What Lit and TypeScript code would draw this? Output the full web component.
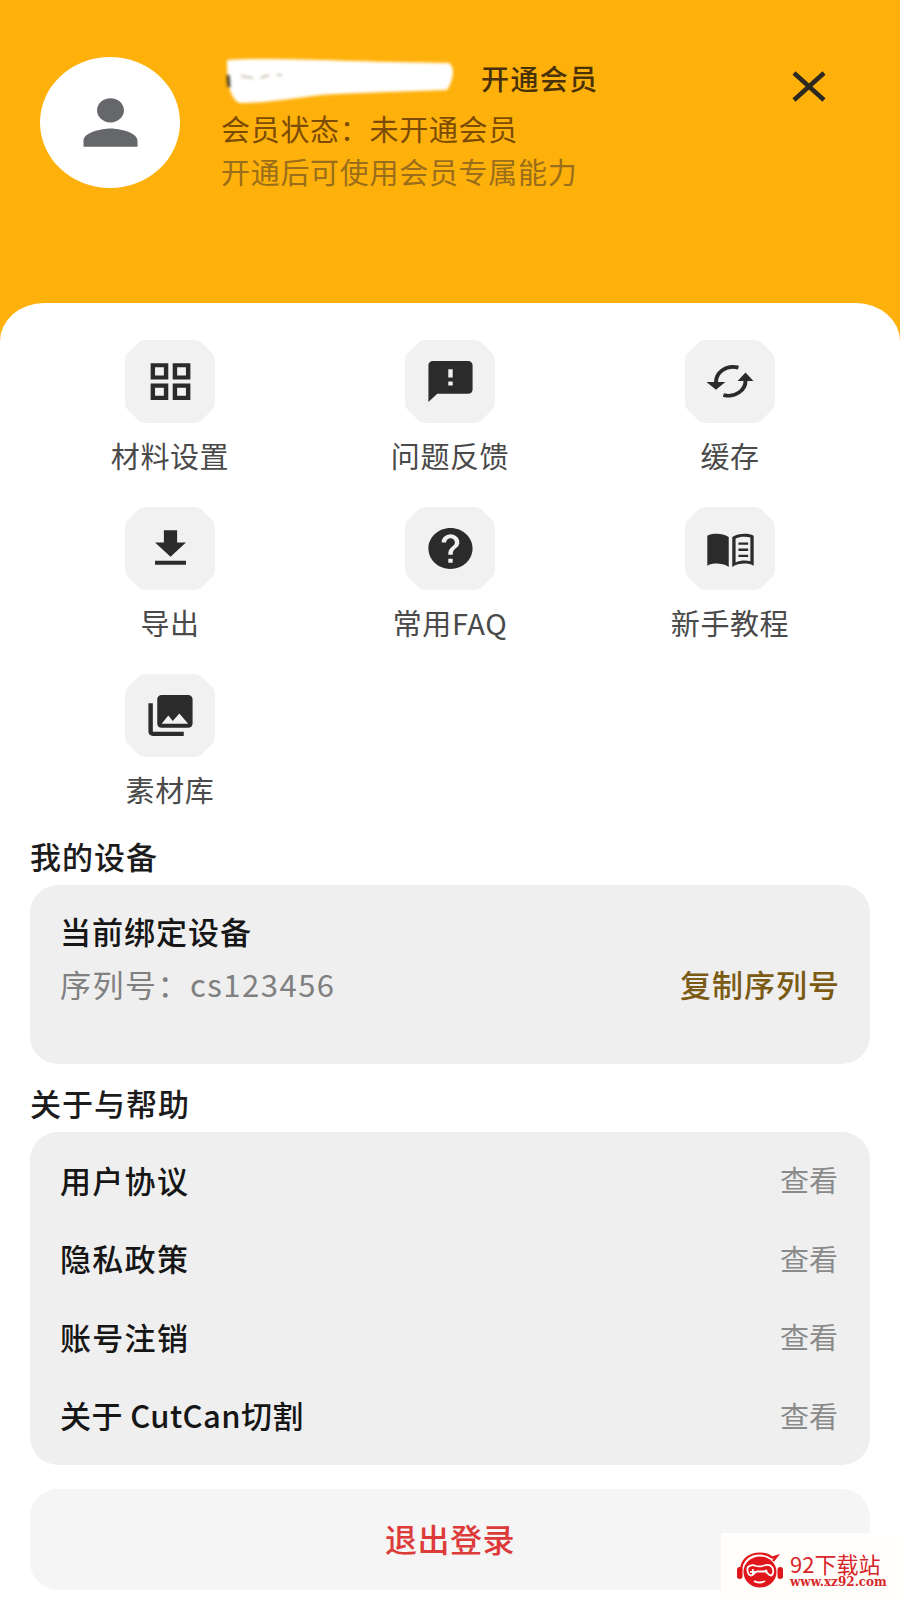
import { LitElement, css, html, svg } from 'lit';
import { customElement } from 'lit/decorators.js';

const icons = {
   grid: svg`<path d="M3 3v8h8V3H3zm6 6H5V5h4v4zm-6 4v8h8v-8H3zm6 6H5v-4h4v4zm4-16v8h8V3h-8zm6 6h-4V5h4v4zm-6 4v8h8v-8h-8zm6 6h-4v-4h4v4z"/>`,
   feedback: svg`<path d="M20 2H4c-1.1 0-1.99.9-1.99 2L2 22l4-4h14c1.1 0 2-.9 2-2V4c0-1.1-.9-2-2-2zm-7 12h-2v-2h2v2zm0-4h-2V6h2v4z"/>`,
   sync: svg`<path d="M5.4 12.4C5.4 8 9.5 3.6 15.6 5.2M18.8 11.6C18.8 16 14.4 20.2 8.8 18.6" fill="none" stroke="#2b2b2b" stroke-width="1.8"/><path d="M1.1 12.2h8.6l-4.3 3.8zM15.2 11.8h7.2L18.8 7.6z"/>`,
   download: svg`<path d="M19 9h-4V3H9v6H5l7 7 7-7zM5 18v2h14v-2H5z"/>`,
   help: svg`<path d="M12 2C6.48 2 2 6.48 2 12s4.48 10 10 10 10-4.48 10-10S17.52 2 12 2zm1 17h-2v-2h2v2zm2.07-7.75l-.9.92C13.45 12.9 13 13.5 13 15h-2v-.5c0-1.1.45-2.1 1.17-2.83l1.24-1.26c.37-.36.59-.86.59-1.41 0-1.1-.9-2-2-2s-2 .9-2 2H8c0-2.21 1.79-4 4-4s4 1.79 4 4c0 .88-.36 1.68-.93 2.25z"/>`,
   book: svg`<path d="M11.2 6.4C9.6 5.2 7.6 4.8 5.6 4.8c-1.5 0-3 .3-4.1 1v14.6c1.3-.7 2.8-1 4.1-1 2 0 4 .5 5.6 1.6V6.4z"/><path fill-rule="evenodd" d="M12.8 6.4c1.6-1.2 3.6-1.6 5.6-1.6 1.5 0 3 .3 4.1 1v14.6c-1.3-.7-2.8-1-4.1-1-2 0-4 .5-5.6 1.6V6.4zm1.5.8v11.6c1.3-.6 2.8-.9 4.1-.9 1 0 1.8.1 2.6.3V6.6c-.8-.2-1.6-.3-2.6-.3-1.5 0-3 .3-4.1.9z"/><path d="M15.6 9h4.4v1.2h-4.4zM15.6 12h4.4v1.2h-4.4zM15.6 15h4.4v1.2h-4.4z"/>`,
   library: svg`<path d="M22 16V4c0-1.1-.9-2-2-2H8c-1.1 0-2 .9-2 2v12c0 1.1.9 2 2 2h12c1.1 0 2-.9 2-2zm-11-4l2.03 2.71L16 11l4 5H8l3-4zM2 6v14c0 1.1.9 2 2 2h14v-2H4V6H2z"/>`,
};

const shortcuts = [
   { label: '材料设置', icon: icons.grid },
   { label: '问题反馈', icon: icons.feedback },
   { label: '缓存', icon: icons.sync },
   { label: '导出', icon: icons.download },
   { label: '常用FAQ', icon: icons.help },
   { label: '新手教程', icon: icons.book },
   { label: '素材库', icon: icons.library },
];

const aboutRows = ['用户协议', '隐私政策', '账号注销', '关于 CutCan切割'];

@customElement( 'app-root' )
export class AppRoot extends LitElement {
   render() {
      return html`
      <div class="page">
        <header class="head">
          <div class="avatar">
            <svg width="81" height="73" viewBox="0 0 24 24" preserveAspectRatio="none" fill="#66676b">
              <path d="M12 12c2.21 0 4-1.79 4-4s-1.79-4-4-4-4 1.79-4 4 1.79 4 4 4zm0 2c-2.67 0-8 1.34-8 4v2h16v-2c0-2.66-5.33-4-8-4z"/>
            </svg>
          </div>
          <div class="info">
            <div class="name-row">
              <svg class="name-mask" width="240" height="50" viewBox="0 0 240 50">
                <path d="M6 5C60 2 120 7 228 8c6 4 5 16-2 27-40 1-80 3-110 4-30 1-60 9-98 9C8 42 6 25 6 5z" fill="#fff"/>
                <path d="M7 20l1 12" stroke="#3a3020" stroke-width="3"/>
                <path d="M20 21l12 2M40 23l8-3M56 20l5 0" stroke="#c9c2b0" stroke-width="2"/>
              </svg>
              <span class="open">开通会员</span>
            </div>
            <div class="status">会员状态：未开通会员</div>
            <div class="hint">开通后可使用会员专属能力</div>
          </div>
          <svg class="close" width="36" height="33" viewBox="0 0 36 33">
            <path d="M3 3 L33 30 M33 3 L3 30" stroke="#2c2a20" stroke-width="4.5" fill="none"/>
          </svg>
        </header>

        <main class="sheet">
          <div class="grid">
            ${ shortcuts.map( s => html`
              <div class="item">
                <div class="tile">
                  <svg width="53" height="49" viewBox="0 0 24 24" preserveAspectRatio="none" fill="#2b2b2b">${ s.icon }</svg>
                </div>
                <div class="label">${ s.label }</div>
              </div>
            ` ) }
          </div>

          <h2 class="title first">我的设备</h2>
          <section class="card device">
            <div class="device-name">当前绑定设备</div>
            <div class="row serial">
              <span class="serial-no">序列号：cs123456</span>
              <span class="copy">复制序列号</span>
            </div>
          </section>

          <h2 class="title">关于与帮助</h2>
          <section class="card about">
            ${ aboutRows.map( r => html`
              <div class="row about-row">
                <span class="about-name">${ r }</span>
                <span class="view">查看</span>
              </div>
            ` ) }
          </section>

          <section class="card logout"><span>退出登录</span></section>
        </main>

        <div class="mark">
          <svg width="46" height="36" viewBox="0 0 46 36">
            <path d="M4 19C4 8 12 1.5 23 1.5c5 0 9 1.500 12 4l5-1.500-4 5" fill="none" stroke="#e0161b" stroke-width="2.2"/>
            <rect x="0" y="15" width="5.500" height="12" rx="2.700" fill="#e0161b"/>
            <rect x="40.500" y="15" width="5.500" height="12" rx="2.700" fill="#e0161b"/>
            <ellipse cx="23" cy="20" rx="16.500" ry="15.500" fill="#e0161b"/>
            <path d="M11 15c3-2.500 6-2 8-1 3 1 5 .5 8-.5 3-1 6-1 8 1.500 2 3 1.500 8-1 8.500-3 0-4-4-6-4h-8c-2 0-3 4-6 4-3-.5-4.500-5.500-3-8.500z" fill="none" stroke="#fff" stroke-width="1.800"/>
            <path d="M15 17h1.800v2h2v1.800h-2v2H15v-2h-2V19h2z" fill="#fff"/>
            <circle cx="29" cy="19" r="1.500" fill="#fff"/>
            <path d="M17 29c3 2 8 2 11 0" stroke="#fff" stroke-width="1.800" fill="none"/>
          </svg>
          <div class="mark-text">
            <div class="mark-name">92下载站</div>
            <div class="mark-url">www.xz92.com</div>
          </div>
        </div>
      </div>
    `;
   }

   static styles = css`
  :host {
    display: block;
    font-family: "Noto Sans CJK SC", "Noto Sans", sans-serif;
  }
  .page {
    position: relative;
    width: 900px;
    height: 1600px;
    overflow: hidden;
    background: #ffb10b;
  }
  .head {
    display: flex;
    align-items: flex-start;
    height: 303px;
    box-sizing: border-box;
    padding: 57px 0 0 40px;
  }
  .avatar {
    flex: none;
    display: flex;
    align-items: center;
    justify-content: center;
    width: 140px;
    height: 131px;
    border-radius: 50%;
    background: #fff;
  }
  .info {
    width: 572px;
    margin-left: 41px;
  }
  .name-row {
    display: flex;
    align-items: center;
    height: 46px;
  }
  .name-mask {
    flex: none;
    filter: blur(1.5px);
  }
  .open {
    margin-left: 20px;
    padding-bottom: 4px;
    font-size: 28px;
    letter-spacing: 1.4px;
    font-weight: 500;
    line-height: 42px;
    color: #4a3208;
  }
  .status {
    margin-top: 3px;
    font-size: 29px;
    letter-spacing: 0.7px;
    line-height: 44px;
    color: #7c4c04;
  }
  .hint {
    font-size: 29px;
    letter-spacing: 0.7px;
    line-height: 42px;
    color: #9a6e1a;
  }
  .close {
    flex: none;
    margin: 13px 0 0 -2px;
  }
  .sheet {
    height: 1297px;
    box-sizing: border-box;
    padding: 37px 30px 0;
    background: #fff;
    border-radius: 44px 44px 0 0 / 38px 38px 0 0;
  }
  .grid {
    display: grid;
    grid-template-columns: repeat(3, 280px);
    row-gap: 34px;
  }
  .item {
    display: flex;
    flex-direction: column;
    align-items: center;
  }
  .tile {
    display: flex;
    align-items: center;
    justify-content: center;
    width: 90px;
    height: 83px;
    background: #f1f1f1;
    border-radius: 22px;
    clip-path: polygon(16px 0, 74px 0, 100% 16px, 100% 67px, 74px 100%, 16px 100%, 0 67px, 0 16px);
  }
  .label {
    margin-top: 14px;
    font-size: 29px;
    letter-spacing: 0.6px;
    line-height: 36px;
    color: #4a4a4a;
    white-space: nowrap;
  }
  .title {
    margin: 19px 0 9px;
    font-size: 31px;
    letter-spacing: 1px;
    font-weight: 500;
    line-height: 40px;
    color: #1c1c1c;
  }
  .title.first {
    margin-top: 29px;
  }
  .card {
    background: #efefef;
    border-radius: 28px;
  }
  .device {
    height: 179px;
    box-sizing: border-box;
    padding: 26px 30px 0;
  }
  .device-name {
    font-size: 31px;
    letter-spacing: 1px;
    font-weight: 500;
    line-height: 40px;
    color: #161616;
  }
  .row {
    display: flex;
    align-items: center;
    justify-content: space-between;
  }
  .serial {
    margin-top: 13px;
    line-height: 40px;
  }
  .serial-no {
    font-size: 31px;
    letter-spacing: 1.5px;
    color: #808080;
  }
  .copy {
    font-size: 31px;
    letter-spacing: 1px;
    font-weight: 500;
    color: #7b5a14;
  }
  .about {
    height: 333px;
    box-sizing: border-box;
    padding: 8px 32px 0 30px;
  }
  .about-row {
    height: 78.5px;
  }
  .about-name {
    font-size: 31px;
    letter-spacing: 1.3px;
    font-weight: 500;
    color: #161616;
  }
  .about-row:last-child .about-name {
    letter-spacing: 0.4px;
  }
  .view {
    font-size: 29px;
    color: #8a8a8a;
  }
  .logout {
    margin-top: 24px;
    height: 101px;
    display: flex;
    align-items: center;
    justify-content: center;
    background: #f5f5f5;
    font-size: 32px;
    letter-spacing: 0.5px;
    font-weight: 500;
    color: #dd3a3a;
    padding-bottom: 3px;
    box-sizing: border-box;
  }
  .mark {
    position: absolute;
    right: 0;
    bottom: 0;
    display: flex;
    align-items: center;
    width: 179px;
    height: 67px;
    box-sizing: border-box;
    padding: 6px 0 0 16px;
    background: #fffefb;
  }
  .mark-text {
    margin-left: 7px;
  }
  .mark-name {
    font-size: 22px;
    line-height: 26px;
    color: #d8262a;
    white-space: nowrap;
  }
  .mark-url {
    font-family: "DejaVu Serif", serif;
    font-size: 12px;
    font-weight: 700;
    line-height: 13px;
    color: #d8262a;
    white-space: nowrap;
  }
  `;
}

declare global {
   interface HTMLElementTagNameMap {
      'app-root': AppRoot;
   }
};
